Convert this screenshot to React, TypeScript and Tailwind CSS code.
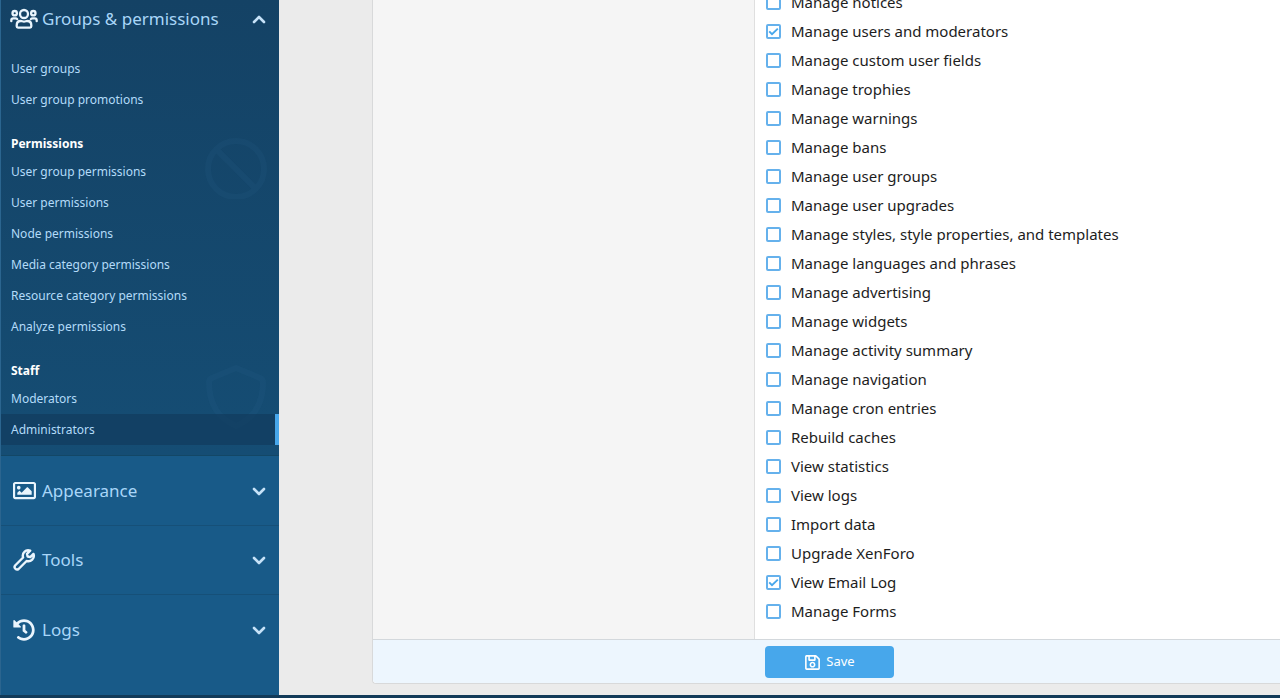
import { useState, type ReactNode } from "react";
import { FaHistory, FaRegImage, FaRegSave } from "react-icons/fa";

type Permission = { label: string; granted?: boolean };

const permissions: Permission[] = [
  { label: "Manage notices" },
  { label: "Manage users and moderators", granted: true },
  { label: "Manage custom user fields" },
  { label: "Manage trophies" },
  { label: "Manage warnings" },
  { label: "Manage bans" },
  { label: "Manage user groups" },
  { label: "Manage user upgrades" },
  { label: "Manage styles, style properties, and templates" },
  { label: "Manage languages and phrases" },
  { label: "Manage advertising" },
  { label: "Manage widgets" },
  { label: "Manage activity summary" },
  { label: "Manage navigation" },
  { label: "Manage cron entries" },
  { label: "Rebuild caches" },
  { label: "View statistics" },
  { label: "View logs" },
  { label: "Import data" },
  { label: "Upgrade XenForo" },
  { label: "View Email Log", granted: true },
  { label: "Manage Forms" },
];

function UsersIcon() {
  return (
    <svg viewBox="0 0 28 22" className="h-[22px] w-7" fill="none" stroke="currentColor" strokeWidth="2.3" strokeLinecap="round" strokeLinejoin="round" aria-hidden="true">
      <circle cx="14" cy="6" r="4" />
      <circle cx="4.7" cy="5.2" r="2.2" />
      <circle cx="23.3" cy="5.2" r="2.2" />
      <path d="M8 19.6h12c.9 0 1.3-.5 1.3-1.3v-1c0-2.6-1.7-4.3-4.1-4.3-1.2 0-1.7.6-3.2.6s-2-.6-3.2-.6c-2.4 0-4.1 1.7-4.1 4.3v1c0 .8.4 1.3 1.3 1.3z" />
      <path d="M1.3 13.2v-.8c0-1.2.9-2 2-2h2.2c.7 0 1.3.2 1.7.7" />
      <path d="M26.7 13.2v-.8c0-1.2-.9-2-2-2h-2.2c-.7 0-1.3.2-1.7.7" />
    </svg>
  );
}

function WrenchIcon() {
  return (
    <svg viewBox="0 0 24 24" className="h-6 w-6" fill="none" stroke="currentColor" strokeWidth="2.4" strokeLinecap="round" strokeLinejoin="round" aria-hidden="true">
      <path d="M18.2 2.6c-2-.7-4.3-.3-5.8 1.3-1.5 1.5-1.9 3.7-1.3 5.6l-8 8a2.5 2.5 0 0 0 3.500 3.500l8-8c1.900.6 4.100.2 5.600-1.300 1.500-1.500 2-3.800 1.300-5.800l-3.200 3.200-2.700-.6-.6-2.700z" />
    </svg>
  );
}

function Chevron({ up = false }: { up?: boolean }) {
  return (
    <svg viewBox="0 0 14 10" className="h-[10px] w-[14px] text-[#c6e2f8]" fill="none" stroke="currentColor" strokeWidth="2.6" strokeLinecap="round" strokeLinejoin="round" aria-hidden="true">
      <path d={up ? "M2 8 7 3l5 5" : "M2 3l5 5 5-5"} />
    </svg>
  );
}

function SectionButton({ icon, label, open = false }: { icon: ReactNode; label: string; open?: boolean }) {
  return (
    <button type="button" aria-expanded={open} className="flex h-full w-full items-center pr-[13px] pl-[9px] text-left text-[17px] leading-6 text-[#a9d6f8]">
      <span className="mr-1 flex w-7 justify-center text-[#eaf5fd]">{icon}</span>
      <span className="flex-1">{label}</span>
      <Chevron up={open} />
    </button>
  );
}

function NavLinks({ items, active }: { items: string[]; active?: string }) {
  return (
    <ul>
      {items.map((item) => (
        <li key={item}>
          <a
            href="#"
            aria-current={item === active ? "page" : undefined}
            className={
              item === active
                ? "block border-r-4 border-[#47a7eb] bg-[#10395a]/60 pl-[10px] text-[12px] leading-[31px] text-[#b3dbf9]"
                : "block pl-[10px] text-[12px] leading-[31px] text-[#b3dbf9]"
            }
          >
            {item}
          </a>
        </li>
      ))}
    </ul>
  );
}

function NavGroup({ title, art, children }: { title: string; art: ReactNode; children: ReactNode }) {
  return (
    <section className="relative pt-4">
      <div className="absolute top-5 right-[11px] text-[#2f6c95]/12">{art}</div>
      <h3 className="relative pl-[10px] text-[12px] leading-[25px] font-bold text-white">{title}</h3>
      <div className="relative">{children}</div>
    </section>
  );
}

function PermissionRow({ label, granted = false }: Permission) {
  const [checked, setChecked] = useState(granted);
  return (
    <li>
      <label className="flex w-fit items-center gap-[10px] text-[15px] leading-[29px] text-[#1d1d1d]">
        <span className="grid">
          <input
            type="checkbox"
            checked={checked}
            onChange={(e) => setChecked(e.target.checked)}
            className="col-start-1 row-start-1 h-[15px] w-[15px] appearance-none rounded-xs border-2 border-[#65b1ec] bg-white"
          />
          {checked && (
            <svg viewBox="0 0 15 15" className="pointer-events-none col-start-1 row-start-1 h-[15px] w-[15px] text-[#47a7eb]" fill="none" stroke="currentColor" strokeWidth="1.9" aria-hidden="true">
              <path d="m3.2 7.400 2.800 2.800 5.800-5.600" />
            </svg>
          )}
        </span>
        {label}
      </label>
    </li>
  );
}

export default function App() {
  return (
    <div className="flex min-h-screen flex-col overflow-hidden bg-[#ebebeb] font-['Noto_Sans','Open_Sans',sans-serif]">
      <div className="flex flex-1">
        <nav aria-label="Admin navigation" className="w-[279px] shrink-0 border-l border-[#2b658f] bg-[#185a88]">
          <div className="border-b border-[#134766] bg-linear-to-b from-[#144265] to-[#154d74] pb-[10px]">
            <div className="h-[38px]">
              <SectionButton icon={<UsersIcon />} label="Groups & permissions" open />
            </div>
            <div className="pt-[15px]">
              <NavLinks items={["User groups", "User group promotions"]} />
            </div>
            <NavGroup
              title="Permissions"
              art={
                <svg viewBox="0 0 64 64" className="h-16 w-16" fill="none" stroke="currentColor" strokeWidth="6" aria-hidden="true">
                  <path d="M60 34a28 28 0 1 1-56 0 28 28 0 0 1 56 0zM12.2 14.2l39.6 39.6" />
                </svg>
              }
            >
              <NavLinks
                items={[
                  "User group permissions",
                  "User permissions",
                  "Node permissions",
                  "Media category permissions",
                  "Resource category permissions",
                  "Analyze permissions",
                ]}
              />
            </NavGroup>
            <NavGroup
              title="Staff"
              art={
                <svg viewBox="0 0 64 68" className="h-[68px] w-16" fill="none" stroke="currentColor" strokeWidth="6" strokeLinejoin="round" aria-hidden="true">
                  <path d="M32 6 56 16c2 1 3 2 3 4 0 20-8 36-27 44C13 56 5 40 5 20c0-2 1-3 3-4z" />
                </svg>
              }
            >
              <NavLinks items={["Moderators", "Administrators"]} active="Administrators" />
            </NavGroup>
          </div>
          <div className="h-[70px] border-b border-[#165078]">
            <SectionButton icon={<FaRegImage size={23} />} label="Appearance" />
          </div>
          <div className="h-[69px] border-b border-[#165078]">
            <SectionButton icon={<WrenchIcon />} label="Tools" />
          </div>
          <div className="h-[70px]">
            <SectionButton icon={<FaHistory size={22} />} label="Logs" />
          </div>
        </nav>
        <main className="min-w-0 flex-1 pb-[11px] pl-[93px]">
          <form onSubmit={(e) => e.preventDefault()} className="flex h-full flex-col rounded-bl border-b border-l border-[#d8d9da] bg-white">
            <div className="flex flex-1">
              <div className="w-[382px] shrink-0 border-r border-[#dfdfdf] bg-[#f5f5f5]" />
              <ul aria-label="Administrator permissions" className="-mt-3 flex-1 pl-[11px]">
                {permissions.map((p) => (
                  <PermissionRow key={p.label} {...p} />
                ))}
              </ul>
            </div>
            <div className="rounded-bl border-t border-[#d3d8dc] bg-[#edf6fe] pt-[6px] pb-[5px] pl-[392px]">
              <button type="submit" className="flex h-8 w-[129px] items-center justify-center gap-[5px] rounded-sm bg-[#47a7eb] text-[13px] text-white">
                <FaRegSave size={17} aria-hidden="true" />
                Save
              </button>
            </div>
          </form>
        </main>
      </div>
      <footer className="h-[3px] bg-[#123b59]" />
    </div>
  );
}
